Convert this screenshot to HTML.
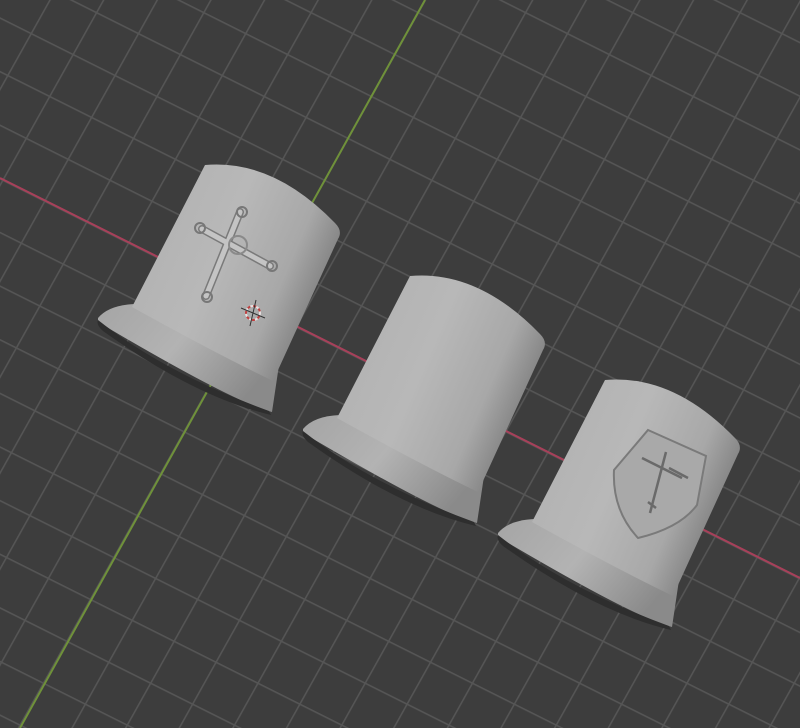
<!DOCTYPE html>
<html><head><meta charset="utf-8"><style>
html,body{margin:0;padding:0;background:#3d3d3d;width:800px;height:728px;overflow:hidden}
svg{display:block}
</style></head><body>
<svg width="800" height="728" viewBox="0 0 800 728" xmlns="http://www.w3.org/2000/svg">
<defs>
<pattern id="grid" patternUnits="userSpaceOnUse" width="33" height="33" patternTransform="matrix(1.27 0.635 -0.71 1.27 254 305)">
<path d="M0,0.5 H33 M0.5,0 V33" stroke="#555" stroke-width="1.2" fill="none"/>
</pattern>
<linearGradient id="body" x1="0" y1="0" x2="1" y2="0.45">
<stop offset="0" stop-color="#9a9a9a"/>
<stop offset="0.2" stop-color="#b3b3b3"/>
<stop offset="0.5" stop-color="#b8b8b8"/>
<stop offset="0.8" stop-color="#a8a8a8"/>
<stop offset="1" stop-color="#7e7e7e"/>
</linearGradient>
<linearGradient id="flange" x1="0" y1="0" x2="1" y2="0.5">
<stop offset="0" stop-color="#a5a5a5"/>
<stop offset="0.5" stop-color="#b3b3b3"/>
<stop offset="1" stop-color="#8a8a8a"/>
</linearGradient>
<g id="cyl">
<path d="M303,429 Q314,416 340,415 L484,476 L477,523 Q440,514 303,433 Z" fill="url(#flange)"/>
<path d="M303,431 Q370,484 474,522 L476,526 Q400,508 308,442 Q301,436 303,431 Z" fill="#2e2e2e"/>
<path d="M410,276 Q478,270 540,334 Q548,342 543,350 L478,492 Q420,464 337,418 Z" fill="url(#body)"/>
</g>
</defs>
<rect width="800" height="728" fill="#3d3d3d"/>
<rect width="800" height="728" fill="url(#grid)"/>
<line x1="0" y1="178" x2="800" y2="578" stroke="#a8405a" stroke-width="2"/>
<line x1="425" y1="0" x2="20" y2="728" stroke="#6f913a" stroke-width="2"/>
<use href="#cyl" transform="translate(-205,-111)"/>
<use href="#cyl"/>
<use href="#cyl" transform="translate(195,104)"/>
<g stroke-linecap="round" fill="none">
<path d="M240,212 L206,296" stroke="#7a7a7a" stroke-width="8"/>
<path d="M202,229 L270,266" stroke="#7a7a7a" stroke-width="8"/>
<path d="M240,212 L206,296" stroke="#c4c4c4" stroke-width="5"/>
<path d="M202,229 L270,266" stroke="#c4c4c4" stroke-width="5"/>
<circle cx="238" cy="245" r="9" stroke="#8a8a8a" stroke-width="2"/>
<circle cx="242" cy="212" r="5" stroke="#777" stroke-width="2"/>
<circle cx="207" cy="297" r="5" stroke="#777" stroke-width="2"/>
<circle cx="200" cy="228" r="5" stroke="#777" stroke-width="2"/>
<circle cx="272" cy="266" r="5" stroke="#777" stroke-width="2"/>
</g>
<g>
<circle cx="253" cy="313" r="7" fill="none" stroke="#e8e0e0" stroke-width="2" stroke-dasharray="3 3"/>
<circle cx="253" cy="313" r="7" fill="none" stroke="#c04040" stroke-width="2" stroke-dasharray="3 3" stroke-dashoffset="3"/>
<path d="M241,308 L265,318 M256,300 L250,326" stroke="#333" stroke-width="1"/>
</g>
<path d="M648,430 L706,456 L697,505 Q680,528 638,538 Q612,510 614,470 Z" fill="#a9a9a9" stroke="#7a7a7a" stroke-width="2"/>
<g stroke="#6a6a6a" stroke-width="2.5" fill="none">
<path d="M666,452 L650,513"/>
<path d="M642,458 L682,478"/>
<path d="M669,468 L688,478"/>
<path d="M648,502 L656,508"/>
</g>
</svg>
</body></html>
